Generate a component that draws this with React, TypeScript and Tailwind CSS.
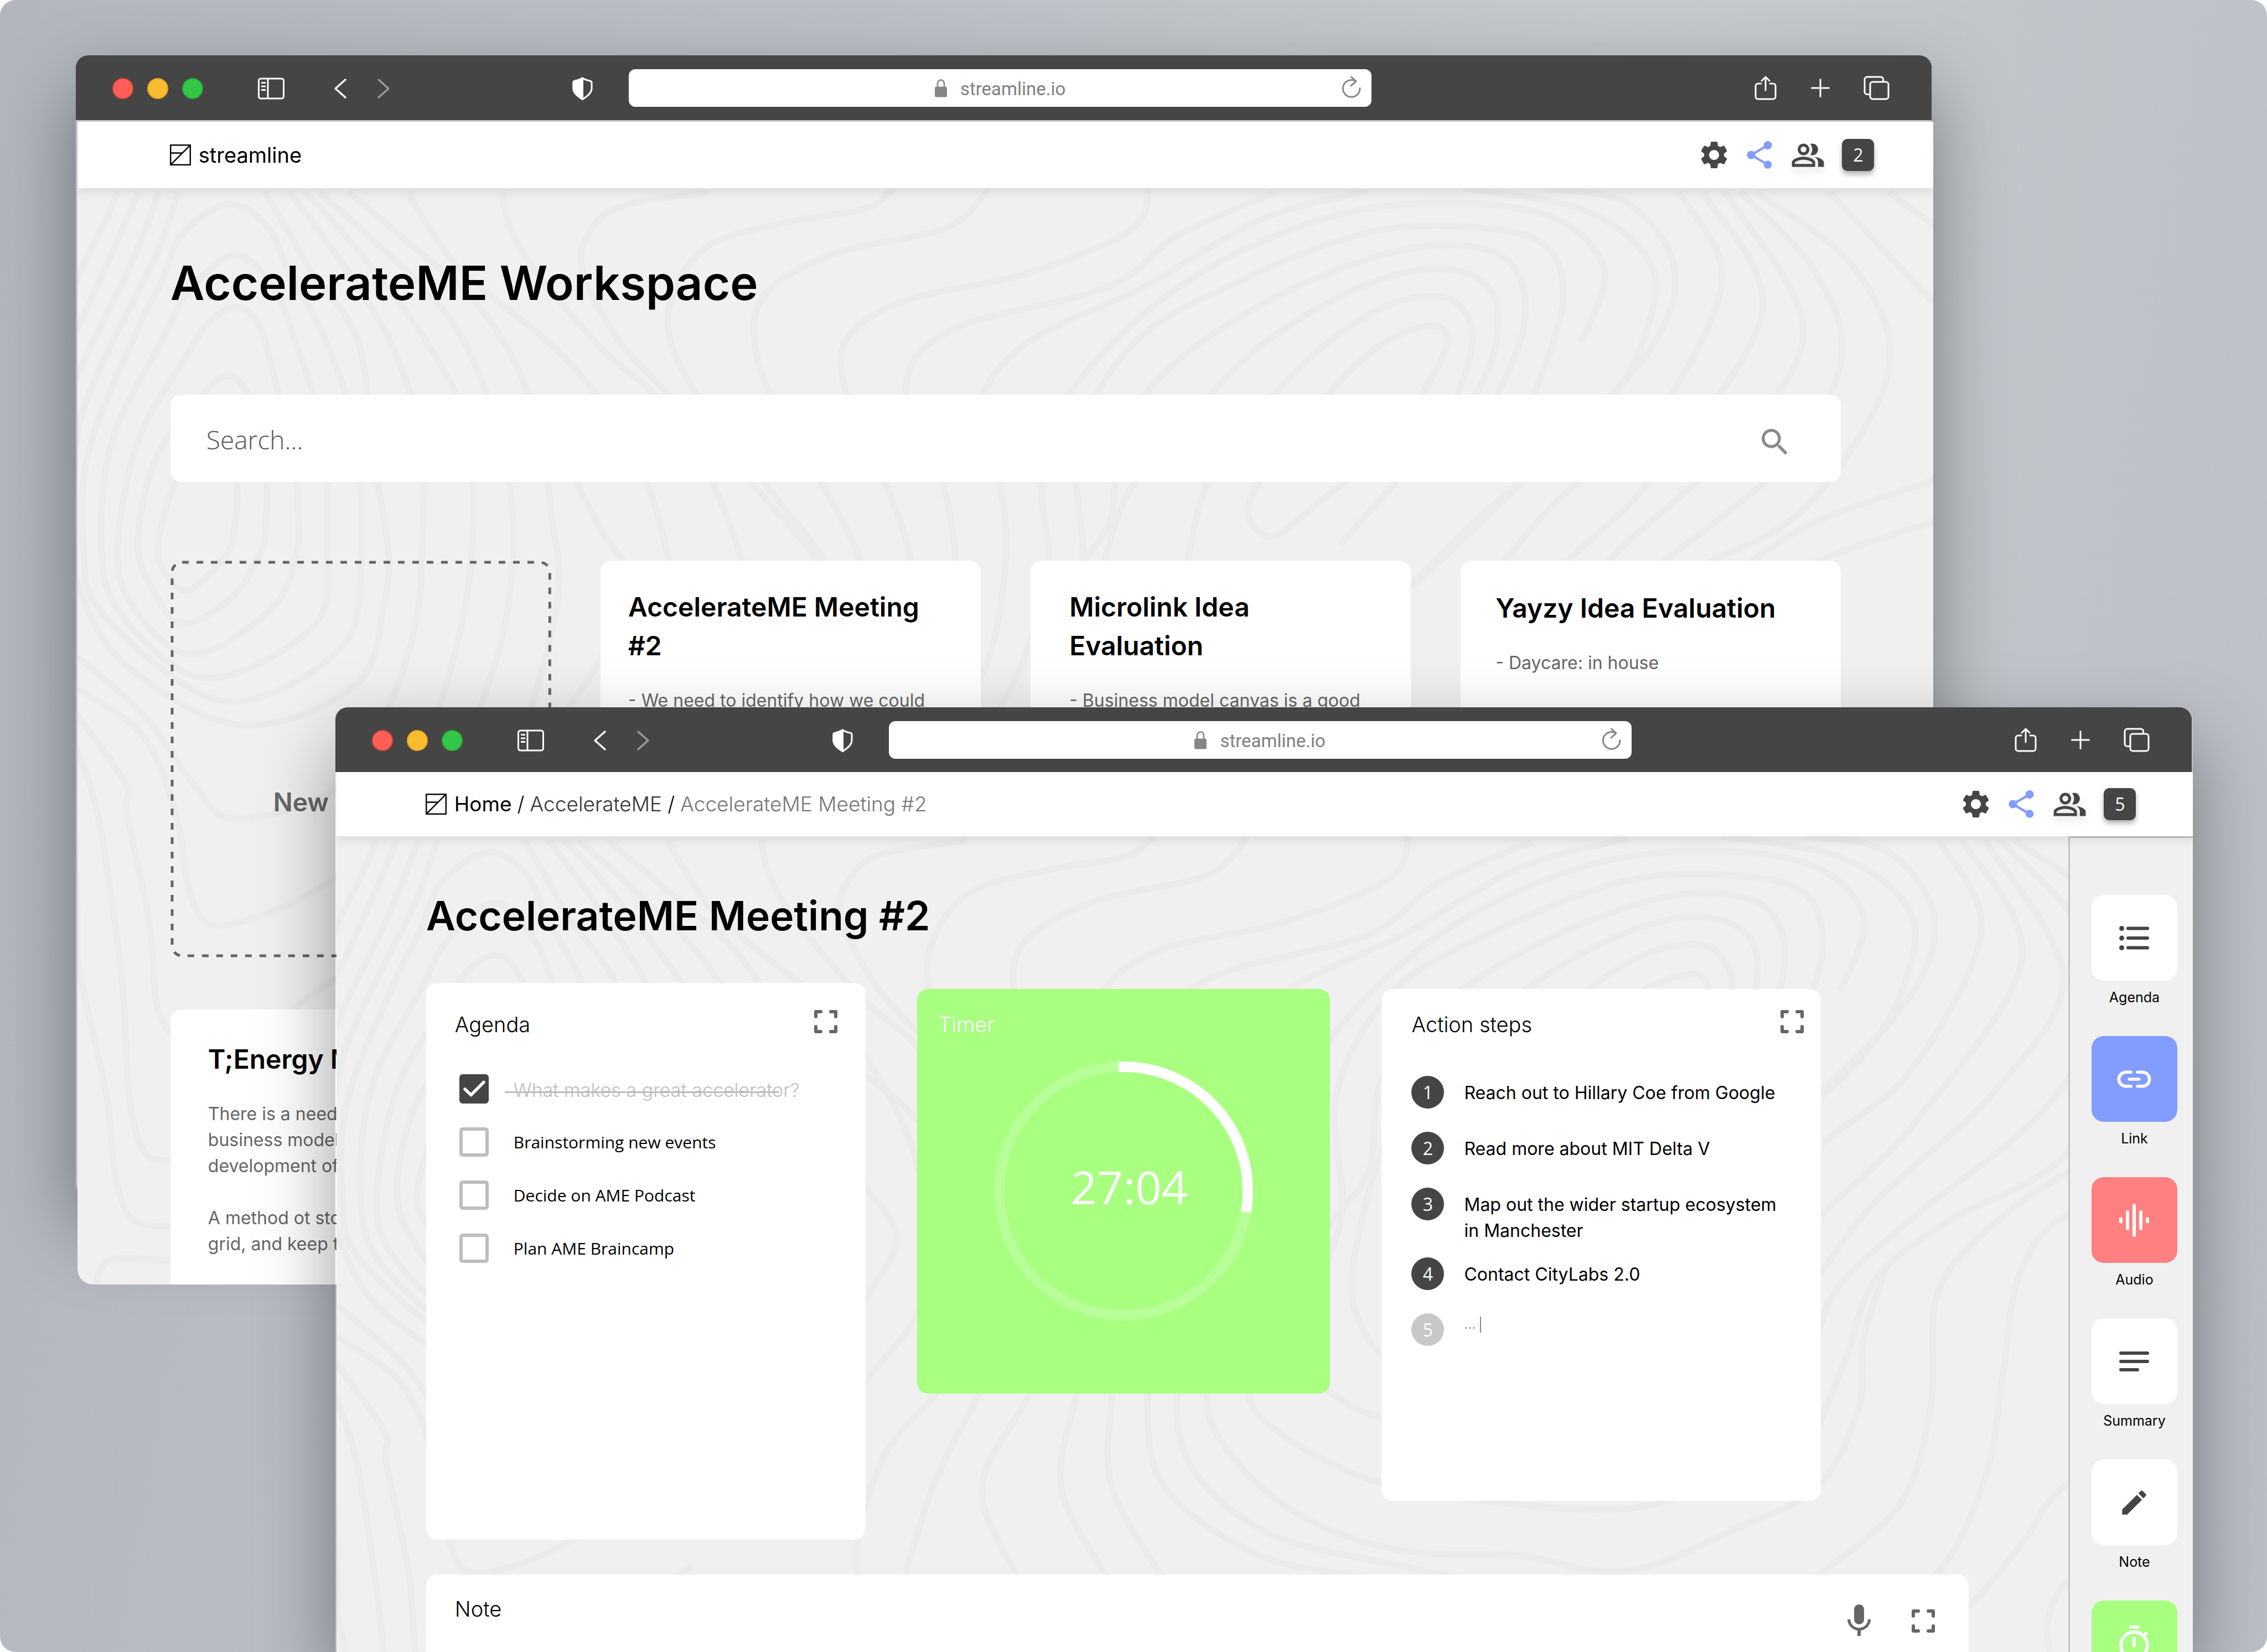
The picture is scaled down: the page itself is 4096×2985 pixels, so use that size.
import React from "react";
import {
  MdSettings,
  MdShare,
  MdOutlinePeopleAlt,
  MdSearch,
  MdMic,
  MdModeEdit,
  MdOutlineTimer,
} from "react-icons/md";

/* ---------- background contour lines ---------- */

type Line = number[];

const CONTOURS: Line[] = [
  // rings around the upper-left hill
  [34, 8, 20, 80, 2, 162, -6, 220],
  [51, 8, 32, 110, 14, 200, 0, 270],
  [69, 8, 50, 120, 34, 200, 12, 300, -4, 380],
  [85, 8, 68, 120, 43, 234, 18, 350, 0, 470, -4, 640, 0, 760, 41, 915, 138, 1030, 235, 953, 259, 799, 262, 683, 250, 520, 237, 294, 198, 162, 175, 70, 158, 8],
  [240, 683, 225, 876, 124, 984, 22, 818, 5, 683, 10, 500, 51, 270, 71, 180, 88, 90, 127, 31, 160, 72, 179, 162, 210, 294, 236, 480, 240, 683],
  [211, 683, 201, 837, 109, 940, 37, 818, 20, 683, 30, 480, 71, 294, 94, 198, 133, 128, 165, 190, 185, 300, 208, 480, 211, 683],
  [187, 683, 167, 799, 97, 895, 46, 799, 34, 683, 52, 480, 90, 330, 112, 255, 136, 228, 155, 270, 168, 380, 184, 520, 187, 683],
  [158, 683, 133, 780, 90, 835, 66, 780, 51, 683, 66, 520, 104, 400, 130, 360, 150, 430, 160, 560, 158, 683],
  [131, 683, 119, 722, 92, 772, 75, 741, 68, 683, 84, 560, 112, 490, 134, 560, 131, 683],
  // slopes falling to the right of the hill
  [179, 8, 218, 126, 264, 294, 290, 480, 291, 700, 285, 840, 262, 1000, 216, 1154, 133, 1210, 99, 1146, 56, 1011, 0, 899],
  [192, 8, 226, 90, 295, 294, 330, 470, 333, 700, 318, 900, 290, 1080, 250, 1240, 218, 1322, 163, 1389, 114, 1413, 95, 1352, 83, 1201, 55, 1050, 0, 960],
  [204, 8, 245, 90, 315, 252, 352, 440, 368, 640, 360, 850, 330, 1060],
  [229, 8, 272, 90, 342, 234, 385, 420, 400, 620, 405, 800, 370, 1100],
  [280, 8, 291, 54, 326, 162, 400, 300, 445, 418, 480, 560, 498, 700, 505, 800, 489, 925, 445, 1051, 390, 1240],
  [359, 8, 365, 72, 388, 162, 445, 313, 489, 401, 535, 560, 562, 720, 570, 820, 545, 940, 505, 1072, 460, 1200, 440, 1420, 500, 1600],
  [532, 8, 458, 36, 431, 90, 427, 162, 458, 294, 510, 420, 575, 580, 625, 720, 635, 850, 585, 1072, 545, 1250, 575, 1420],
  [690, 0, 665, 40, 600, 65, 535, 108, 504, 198, 501, 294, 530, 420, 585, 580, 632, 720, 650, 850, 625, 1072, 612, 1250, 650, 1420],
  [770, 0, 735, 75, 640, 125, 582, 200, 572, 296, 590, 420, 632, 580, 662, 720, 668, 850, 655, 1072, 655, 1250, 700, 1430],
  [905, 0, 890, 80, 800, 165, 700, 215, 650, 290, 650, 400, 685, 580, 704, 720, 700, 850, 685, 1072, 700, 1250, 780, 1380, 870, 1420],
  [440, 450, 468, 495, 489, 540, 500, 562],
  [420, 560, 445, 666, 473, 770, 445, 892, 400, 1040, 330, 1200],
  [545, 1060, 505, 1240, 480, 1420],
  // ridge in the upper right
  [1010, 10, 930, 90, 870, 190, 740, 270, 700, 380, 730, 560, 742, 720, 735, 880, 710, 1072, 725, 1220, 790, 1340, 900, 1400, 990, 1440],
  [1090, 5, 1000, 60, 900, 190, 800, 300, 760, 430, 780, 580, 784, 720, 770, 900, 735, 1072, 760, 1200, 820, 1310, 900, 1370, 1000, 1380, 1060, 1408, 1110, 1400, 1180, 1330, 1250, 1250, 1285, 1100, 1290, 960, 1310, 820],
  [1270, 296, 1290, 160, 1250, 60, 1160, 28, 1050, 60, 930, 190, 837, 396, 815, 560, 820, 720, 800, 900, 770, 1060, 800, 1150, 880, 1240, 980, 1278, 1090, 1290, 1170, 1240],
  [1230, 400, 1255, 220, 1240, 110, 1180, 75, 1090, 85, 980, 180, 893, 296, 845, 490, 849, 720, 825, 880, 815, 1000, 850, 1084, 900, 1130],
  [1180, 480, 1218, 300, 1220, 180, 1190, 118, 1120, 118, 1020, 200, 930, 330, 882, 470, 872, 640, 837, 754, 810, 900],
  [1120, 560, 1185, 380, 1200, 240, 1180, 170, 1130, 158, 1060, 215, 985, 330, 920, 500, 882, 611, 858, 837, 867, 947, 900, 1040],
  [1067, 683, 1150, 460, 1178, 300, 1165, 220, 1130, 210, 1085, 250, 1030, 350, 960, 540, 937, 720, 925, 820],
  [1150, 340, 1158, 285, 1140, 265, 1095, 310, 1040, 440, 990, 600, 1008, 668, 1050, 600, 1110, 480, 1150, 340],
  [1170, 0, 1270, 40, 1325, 130, 1330, 240, 1290, 420, 1180, 640, 1110, 800],
  [1240, 0, 1310, 30, 1349, 153, 1330, 304, 1250, 500, 1130, 760],
  [1353, 8, 1389, 182, 1330, 448, 1250, 600, 1190, 760],
  [1373, 8, 1423, 240, 1330, 558, 1250, 740, 1220, 900],
  [1392, 8, 1458, 269, 1400, 490, 1300, 700, 1250, 850],
  [1405, 8, 1468, 160, 1490, 330, 1440, 530, 1330, 734, 1270, 860, 1250, 960],
  [1418, 8, 1500, 150, 1530, 350, 1460, 612, 1360, 740, 1300, 850, 1275, 1000, 1250, 1140],
  [1480, 8, 1568, 220],
  [1530, 8, 1580, 90],
  [1568, 560, 1460, 649, 1387, 770, 1351, 886, 1346, 1099, 1320, 1282, 1250, 1420],
  [1568, 640, 1460, 728, 1421, 843, 1407, 1038, 1392, 1233, 1351, 1416, 1280, 1500],
  [1568, 1080, 1460, 1245, 1424, 1355, 1375, 1483, 1300, 1600],
  [1500, 1390, 1460, 1434, 1445, 1507, 1447, 1568],
  // left edge, lower half
  [-4, 1000, 40, 1140, 42, 1201, 61, 1413, 68, 1577, 90, 1650],
  [-4, 1060, 17, 1201, 37, 1504, 44, 1746, 59, 1855, 90, 1861],
  [-4, 1160, 0, 1400, 2, 1504, 25, 1746, 32, 1898, 49, 1982, 90, 1989],
  [14, 2110, 29, 2055, 90, 2061],
  [180, 1577, 218, 1516, 300, 1400],
];

function smooth(p: Line): string {
  const n = p.length / 2;
  const at = (i: number) => {
    const k = Math.max(0, Math.min(n - 1, i));
    return [p[k * 2], p[k * 2 + 1]];
  };
  let d = `M${p[0]} ${p[1]}`;
  for (let i = 0; i < n - 1; i++) {
    const [a, b, c, e] = [at(i - 1), at(i), at(i + 1), at(i + 2)];
    d += `C${b[0] + (c[0] - a[0]) / 6} ${b[1] + (c[1] - a[1]) / 6} ${c[0] - (e[0] - b[0]) / 6} ${c[1] - (e[1] - b[1]) / 6} ${c[0]} ${c[1]}`;
  }
  return d;
}

const Topography = () => (
  <svg
    aria-hidden
    className="pointer-events-none absolute left-0 top-0 h-[1477px] w-full overflow-visible"
    viewBox="0 0 1568 1568"
    preserveAspectRatio="none"
    fill="none"
    stroke="#ebebeb"
    strokeWidth="12"
  >
    {CONTOURS.map((c, i) => (
      <path key={i} d={smooth(c)} vectorEffect="non-scaling-stroke" />
    ))}
  </svg>
);

/* ---------- icons ---------- */

const SidebarIcon = () => (
  <svg className="h-[40px] w-[48px]" viewBox="0 0 48 40" fill="none" stroke="#fff" strokeWidth="3">
    <rect x="1.5" y="2" width="45" height="36" rx="4" />
    <path d="M18 2v36" />
    <path d="M6 9.5h8M6 16h8M6 22.5h8" />
  </svg>
);

const Chevron = ({ flip }: { flip?: boolean }) => (
  <svg className="h-[38px] w-[24px]" viewBox="0 0 24 38" fill="none" stroke={flip ? "#9b9b9b" : "#fff"} strokeWidth="3.4" strokeLinecap="round" strokeLinejoin="round">
    <path d={flip ? "M3 3l18 16L3 35" : "M21 3L3 19l18 16"} />
  </svg>
);

const ShieldIcon = () => (
  <svg className="h-[42px] w-[37px]" viewBox="0 0 37 42" fill="none" stroke="#fff" strokeWidth="3" strokeLinejoin="round">
    <path d="M18.5 2C14 5.5 8 6.5 4 7.5c-1.5.5-2 1.5-2 3V21c0 8 8 14 16.5 19.5C27 35 35 29 35 21V10.5c0-1.5-.5-2.5-2-3C29 6.500 23 5.500 18.500 2z" />
    <path d="M18.5 2C14 5.5 8 6.5 4 7.5c-1.5.5-2 1.5-2 3V21c0 8 8 14 16.5 19.5z" fill="#fff" />
  </svg>
);

const LockIcon = () => (
  <svg className="h-[34px] w-[22px]" viewBox="0 0 22 34" fill="none">
    <path d="M5 16V9a6 6.5 0 0 1 12 0v7" stroke="#868686" strokeWidth="2.6" />
    <rect x="0" y="14.5" width="22" height="19" rx="3" fill="#868686" />
  </svg>
);

const ReloadIcon = () => (
  <svg className="h-[40px] w-[36px]" viewBox="0 0 36 40" fill="none" stroke="#868686" strokeWidth="3" strokeLinecap="round" strokeLinejoin="round">
    <path d="M33 22.5A15.3 15.3 0 1 1 25 9.5" />
    <path d="M17.5 2L26 9.8l-9 8.2" />
  </svg>
);

const ShareUpIcon = () => (
  <svg className="h-[44px] w-[40px]" viewBox="0 0 40 44" fill="none" stroke="#fff" strokeWidth="3" strokeLinecap="round" strokeLinejoin="round">
    <path d="M12 14H6.5A4.5 4.5 0 0 0 2 18.5v19A4.5 4.5 0 0 0 6.5 42h27a4.5 4.5 0 0 0 4.5-4.5v-19a4.5 4.5 0 0 0-4.5-4.5H28" />
    <path d="M20 26V3M13 9l7-7 7 7" />
  </svg>
);

const PlusIcon = () => (
  <svg className="h-[34px] w-[34px]" viewBox="0 0 34 34" fill="none" stroke="#fff" strokeWidth="3" strokeLinecap="round">
    <path d="M17 1.5v31M1.5 17h31" />
  </svg>
);

const TabsIcon = () => (
  <svg className="h-[44px] w-[47px]" viewBox="0 0 47 44" fill="none" stroke="#fff" strokeWidth="3">
    <path d="M11 33.5H6.5A4.5 4.5 0 0 1 2 29V6.5A4.5 4.5 0 0 1 6.5 2H31a4.5 4.5 0 0 1 4.5 4.5V11" />
    <rect x="12" y="11" width="33" height="31" rx="4.5" />
  </svg>
);

const LogoIcon = () => (
  <svg className="h-[38px] w-[38px]" viewBox="0 0 38 38" fill="none" stroke="#000" strokeWidth="2.4">
    <rect x="1.2" y="1.2" width="35.6" height="35.6" />
    <path d="M1.2 36.8L36.8 1.2M1.2 15.5h21" />
  </svg>
);

const ExpandIcon = () => (
  <svg className="h-[42px] w-[42px]" viewBox="0 0 42 42" fill="none" stroke="#666" strokeWidth="6" strokeLinecap="round" strokeLinejoin="round">
    <path d="M3 12V3h9M30 3h9v9M39 30v9h-9M12 39H3v-9" />
  </svg>
);

const ListIcon = () => (
  <svg className="h-[48px] w-[56px]" viewBox="0 0 56 48" fill="none" stroke="#454545" strokeWidth="6" strokeLinecap="round">
    <path d="M17 6.5h35M17 24h35M17 41.5h35" />
    <g fill="#454545" stroke="none">
      <circle cx="5.5" cy="6.5" r="4.5" />
      <circle cx="5.5" cy="24" r="4.5" />
      <circle cx="5.5" cy="41.5" r="4.5" />
    </g>
  </svg>
);

const LinkIcon = () => (
  <svg className="h-[70px] w-[70px]" viewBox="0 0 24 24" fill="none" stroke="#fff" strokeWidth="1.9" strokeLinecap="round">
    <path d="M10 7.6H6.9a4.4 4.4 0 0 0 0 8.800H10M14 7.6h3.100a4.400 4.400 0 0 1 0 8.800H14M9 12h6" />
  </svg>
);

const AudioIcon = () => (
  <svg className="h-[60px] w-[54px]" viewBox="0 0 54 60" fill="none" stroke="#fff" strokeWidth="6" strokeLinecap="round">
    <path d="M3 27.5v5M15 15v30M27 3v54M39 15v30M51 27.5v5" />
  </svg>
);

const SummaryIcon = () => (
  <svg className="h-[36px] w-[54px]" viewBox="0 0 54 36" fill="none" stroke="#454545" strokeWidth="6" strokeLinecap="round">
    <path d="M3 3h48M3 18h48M3 33h30" />
  </svg>
);

/* ---------- shared chrome ---------- */

const TitleBar = () => (
  <div className="relative grid h-[117px] grid-cols-[1000fr_1342fr_1013fr] items-center rounded-t-[22px] bg-[#454545]">
    <div className="flex items-center pl-[66px] pr-[65px] pt-[2px]">
      <div className="flex gap-[25px]">
        <span className="size-[38px] rounded-full border-2 border-[#e2463f] bg-[#ff5f57]" />
        <span className="size-[38px] rounded-full border-2 border-[#e1a325] bg-[#f8bd2e]" />
        <span className="size-[38px] rounded-full border-2 border-[#27a93a] bg-[#33c748]" />
      </div>
      <button aria-label="Toggle sidebar" className="ml-[99px]"><SidebarIcon /></button>
      <button aria-label="Back" className="ml-[89px]"><Chevron /></button>
      <button aria-label="Forward" className="ml-[54px]"><Chevron flip /></button>
      <button aria-label="Privacy report" className="ml-auto"><ShieldIcon /></button>
    </div>
    <div className="grid h-[68px] grid-cols-[1fr_auto_1fr] items-center rounded-[12px] bg-white pr-[18px]">
      <span />
      <div className="flex items-center gap-[24px] pl-[18px]">
        <LockIcon />
        <span className="pt-[4px] font-['Roboto'] text-[33px] leading-[40px] text-[#808080]">streamline.io</span>
      </div>
      <button aria-label="Reload" className="justify-self-end pb-[4px]"><ReloadIcon /></button>
    </div>
    <div className="flex items-center justify-end pr-[76px]">
      <button aria-label="Share page"><ShareUpIcon /></button>
      <button aria-label="New tab" className="ml-[62px]"><PlusIcon /></button>
      <button aria-label="Show tabs" className="ml-[61px]"><TabsIcon /></button>
    </div>
  </div>
);

const NavActions = ({ count, className }: { count: number; className: string }) => (
  <div className={`flex items-center text-[#454545] ${className}`}>
    <button aria-label="Settings"><MdSettings className="size-[60px]" /></button>
    <button aria-label="Share" className="ml-[22px] text-[#829cff]"><MdShare className="size-[60px]" /></button>
    <button aria-label="Members" className="ml-[26px]"><MdOutlinePeopleAlt className="size-[63px] drop-shadow-[0_8px_8px_rgba(0,0,0,0.12)]" /></button>
    <button aria-label="Members online" className="ml-[30px] size-[58px] rounded-[10px] bg-[#454545] font-['Open_Sans'] text-[32px] leading-[58px] text-white shadow-[0_6px_10px_rgba(0,0,0,0.3)]">
      {count}
    </button>
  </div>
);

const Card = ({ title, children, className }: { title: React.ReactNode; children?: React.ReactNode; className: string }) => (
  <article className={`overflow-hidden whitespace-nowrap rounded-[20px] bg-white ${className}`}>
    <h2 className="text-[48px] font-semibold leading-[70px] text-black">{title}</h2>
    <div className="mt-[40px] text-[32px] leading-[47px] text-[#666]">{children}</div>
  </article>
);

/* ---------- workspace window ---------- */

const WorkspaceWindow = () => (
  <section aria-label="Workspace" className="absolute left-[3.34%] top-[100px] h-[2221px] w-[81.95%]">
    <div className="absolute left-0 right-[3px] top-0 h-[2060px] rounded-[22px] bg-[#c4c4c4] shadow-[0_60px_140px_rgba(0,0,0,0.4)]" />
    <div className="relative flex h-full flex-col">
      <div className="mr-[3px]"><TitleBar /></div>
      <div className="relative ml-[3px] mt-[3px] flex min-h-0 grow flex-col overflow-hidden rounded-bl-[28px] bg-[#f0f0f0]">
        <nav className="relative z-10 flex h-[120px] shrink-0 items-center bg-white pl-[167px] pr-[107px] shadow-[0_6px_18px_rgba(0,0,0,0.1)]">
          <a href="#" className="flex items-center gap-[14px]">
            <LogoIcon />
            <span className="text-[38px] leading-[48px] text-black">streamline</span>
          </a>
          <NavActions count={2} className="ml-auto" />
        </nav>
        <main className="relative grow pl-[168px] pr-[167px] pt-[112px]">
          <Topography />
          <div className="relative">
            <h1 className="text-[85px] font-semibold leading-[120px] text-black">AccelerateME Workspace</h1>
            <form className="mt-[141px] flex h-[158px] items-center rounded-[20px] bg-white pl-[65px] pr-[87px]">
              <input
                type="search"
                aria-label="Search"
                placeholder="Search..."
                className="grow bg-transparent pt-[4px] font-['Open_Sans'] text-[46px] font-light leading-[64px] outline-none placeholder:text-[#555] placeholder:opacity-100"
              />
              <button type="button" aria-label="Search" className="pt-[14px] text-[#8a8a8a]"><MdSearch className="size-[64px]" /></button>
            </form>
            <div className="mt-[142px] grid grid-cols-4 gap-x-[90px] gap-y-[95px]">
              <button className="relative flex h-[716px] items-center pl-[186px] pt-[156px] text-left">
                <svg aria-hidden className="absolute inset-0 h-full w-full overflow-visible" fill="none">
                  <rect x="3" y="3" width="99.3%" height="99.3%" rx="18" stroke="#666" strokeWidth="5" strokeDasharray="12 14" />
                </svg>
                <span className="text-[46px] font-semibold leading-[56px] text-[#666]">New</span>
              </button>
              <Card className="pl-[50px] pt-[49px]" title={<>AccelerateME Meeting<br />#2</>}>- We need to identify how we could</Card>
              <Card className="pl-[70px] pt-[49px]" title={<>Microlink Idea<br />Evaluation</>}>- Business model canvas is a good</Card>
              <Card className="pl-[63px] pt-[51px]" title="Yayzy Idea Evaluation">- Daycare: in house</Card>
              <Card className="h-[716px] pl-[68px] pt-[55px]" title="T;Energy M">
                <p>There is a need<br />business model<br />development of</p>
                <p className="mt-[47px]">A method ot sto<br />grid, and keep t</p>
              </Card>
            </div>
          </div>
        </main>
      </div>
    </div>
  </section>
);

/* ---------- meeting window ---------- */

const AGENDA = ["What makes a great accelerator?", "Brainstorming new events", "Decide on AME Podcast", "Plan AME Braincamp"];

const PanelHeader = ({ title, expand = true }: { title: string; expand?: boolean }) => (
  <header className="flex h-[48px] items-start justify-between">
    <h2 className="pt-[2px] text-[38px] font-light leading-[48px]">{title}</h2>
    {expand && <button aria-label={`Expand ${title}`}><ExpandIcon /></button>}
  </header>
);

const AgendaPanel = () => {
  const [done, setDone] = React.useState([true, false, false, false]);
  return (
    <section className="h-[1006px] rounded-[20px] bg-white pl-[52px] pr-[51px] pt-[49px]">
      <PanelHeader title="Agenda" />
      <ul className="mt-[68px] flex flex-col gap-[43px] pl-[8px]">
        {AGENDA.map((label, i) => (
          <li key={label}>
            <label className="flex items-center gap-[45px]">
              <span className="relative size-[53px]">
                <input
                  type="checkbox"
                  checked={done[i]}
                  onChange={() => setDone(done.map((v, k) => (k === i ? !v : v)))}
                  className="block size-[53px] appearance-none rounded-[6px] border-[6px] border-[#bdbdbd] bg-white checked:border-[#454545] checked:bg-[#454545]"
                />
                {done[i] && (
                  <svg aria-hidden className="pointer-events-none absolute inset-0 size-full" viewBox="0 0 53 53" fill="none" stroke="#fff" strokeWidth="5.5" strokeLinecap="round" strokeLinejoin="round">
                    <path d="M10 27l11 10.5L44 14.5" />
                  </svg>
                )}
              </span>
              {done[i] ? (
                <span className="relative pt-[4px] text-[34px] font-light leading-[48px] text-[#bdbdbd]">
                  {label}
                  <span className="absolute -left-[16px] right-[36px] top-[30px] h-[3px] bg-[#bdbdbd]" />
                </span>
              ) : (
                <span className="font-['Open_Sans'] text-[30px] leading-[48px] text-black">{label}</span>
              )}
            </label>
          </li>
        ))}
      </ul>
    </section>
  );
};

const TimerPanel = () => (
  <section className="mt-[11px] flex h-[731px] flex-col rounded-[20px] bg-[#a8ff80] px-[38px] pt-[38px] text-white">
    <PanelHeader title="Timer" expand={false} />
    <div className="mx-auto mt-[45px] grid size-[468px] place-items-center">
      <svg aria-hidden className="col-start-1 row-start-1 size-full" viewBox="0 0 468 468" fill="none" strokeWidth="19">
        <circle cx="234" cy="234" r="224.5" stroke="#fff" strokeOpacity="0.2" />
        <path d="M225.5 9.7A224.5 224.5 0 0 1 455.3 272" stroke="#fff" />
      </svg>
      <time className="col-start-1 row-start-1 pb-[16px] pl-[20px] font-['Open_Sans'] text-[83px] leading-[104px]">27:04</time>
    </div>
  </section>
);

const STEPS: React.ReactNode[] = [
  "Reach out to Hillary Coe from Google",
  "Read more about MIT Delta V",
  <>Map out the wider startup ecosystem<br />in Manchester</>,
  "Contact CityLabs 2.0",
];

const ActionPanel = () => (
  <section className="mt-[11px] h-[925px] rounded-[20px] bg-white pl-[54px] pr-[31px] pt-[38px]">
    <PanelHeader title="Action steps" />
    <ol className="mt-[71px] flex flex-col gap-[25px]">
      {STEPS.map((step, i) => (
        <li key={i} className="flex min-h-[76px] items-start gap-[36px]">
          <span className="size-[59px] shrink-0 rounded-full bg-[#454545] text-center font-['Open_Sans'] text-[32px] leading-[59px] text-white">{i + 1}</span>
          <span className="whitespace-nowrap pt-[7px] text-[32px] leading-[47px] text-black">{step}</span>
        </li>
      ))}
      <li className="flex min-h-[76px] items-start gap-[36px]">
        <span className="size-[59px] shrink-0 rounded-full bg-[#c8c8c8] text-center font-['Open_Sans'] text-[32px] leading-[59px] text-white">5</span>
        <span className="flex items-center gap-[8px] text-[24px] leading-[40px] text-[#999]">
          ...
          <span className="h-[29px] w-[2px] bg-[#888]" />
        </span>
      </li>
    </ol>
  </section>
);

const TOOLS = [
  { name: "Agenda", tile: "bg-white", icon: <ListIcon /> },
  { name: "Link", tile: "bg-[#829cff]", icon: <LinkIcon /> },
  { name: "Audio", tile: "bg-[#ff8080]", icon: <AudioIcon /> },
  { name: "Summary", tile: "bg-white", icon: <SummaryIcon /> },
  { name: "Note", tile: "bg-white", icon: <MdModeEdit className="size-[58px] text-[#454545]" /> },
  { name: "Timer", tile: "bg-[#a8ff80]", icon: <MdOutlineTimer className="size-[72px] text-white" />, iconOnly: true },
];

const MeetingWindow = () => (
  <section aria-label="Meeting" className="absolute bottom-0 left-[14.79%] top-[1278px] w-[81.95%] rounded-t-[22px] shadow-[0_60px_140px_rgba(0,0,0,0.4)]">
    <div className="relative flex h-full flex-col">
      <div className="mr-[2px]"><TitleBar /></div>
      <div className="relative ml-[2px] flex min-h-0 grow flex-col overflow-hidden bg-[#f0f0f0]">
        <nav className="relative z-10 flex h-[116px] shrink-0 items-center bg-white pl-[161px] pr-[103px] shadow-[0_6px_18px_rgba(0,0,0,0.1)]">
          <LogoIcon />
          <div className="ml-[14px] flex items-center gap-[10px] text-[37px] leading-[48px]">
            <a href="#" className="text-black">Home</a>
            <span className="font-light text-black">/</span>
            <a href="#" className="font-light text-[#333]">AccelerateME</a>
            <span className="font-light text-black">/</span>
            <a href="#" aria-current="page" className="font-light text-[#757575]">AccelerateME Meeting #2</a>
          </div>
          <NavActions count={5} className="ml-auto" />
        </nav>
        <div className="relative flex min-h-0 grow">
          <Topography />
          <main className="relative min-w-0 grow overflow-hidden pl-[162px] pr-[180px] pt-[94px]">
            <h1 className="text-[73px] font-semibold leading-[100px] text-black">AccelerateME Meeting #2</h1>
            <div className="mt-[71px] grid w-[90.4%] grid-cols-[794fr_746fr_793fr] items-start gap-x-[93px]">
              <AgendaPanel />
              <TimerPanel />
              <ActionPanel />
            </div>
            <section className="mt-[63px] h-[300px] rounded-[20px] bg-white pl-[52px] pr-[61px] pt-[36px]">
              <header className="flex items-start justify-between">
                <h2 className="pt-[2px] text-[38px] font-light leading-[48px]">Note</h2>
                <div className="flex items-center gap-[59px] pt-[12px] text-[#666]">
                  <button aria-label="Record note"><MdMic className="size-[72px]" /></button>
                  <button aria-label="Expand Note"><ExpandIcon /></button>
                </div>
              </header>
            </section>
          </main>
          <aside className="relative flex w-[225px] shrink-0 flex-col items-center gap-[54px] overflow-hidden border-l-[3px] border-t-[3px] border-[#c4c4c4] bg-[#f0f0f0] pl-[10px] pt-[103px]">
            {TOOLS.map((t) => (
              <button key={t.name} aria-label={t.name} className="flex flex-col items-center gap-[14px] text-[25px] leading-[32px] text-black">
                <span className={`grid size-[155px] place-items-center rounded-[22px] ${t.tile}`}>{t.icon}</span>
                {!t.iconOnly && t.name}
              </button>
            ))}
          </aside>
        </div>
      </div>
    </div>
  </section>
);

export default function App() {
  return (
    <div className="relative h-screen w-full overflow-hidden rounded-[28px] bg-linear-100 from-[#b1b6bf] via-[#c6c9cc] via-65% to-[#bbbfc6] font-['Inter',sans-serif]">
      <WorkspaceWindow />
      <MeetingWindow />
    </div>
  );
}
